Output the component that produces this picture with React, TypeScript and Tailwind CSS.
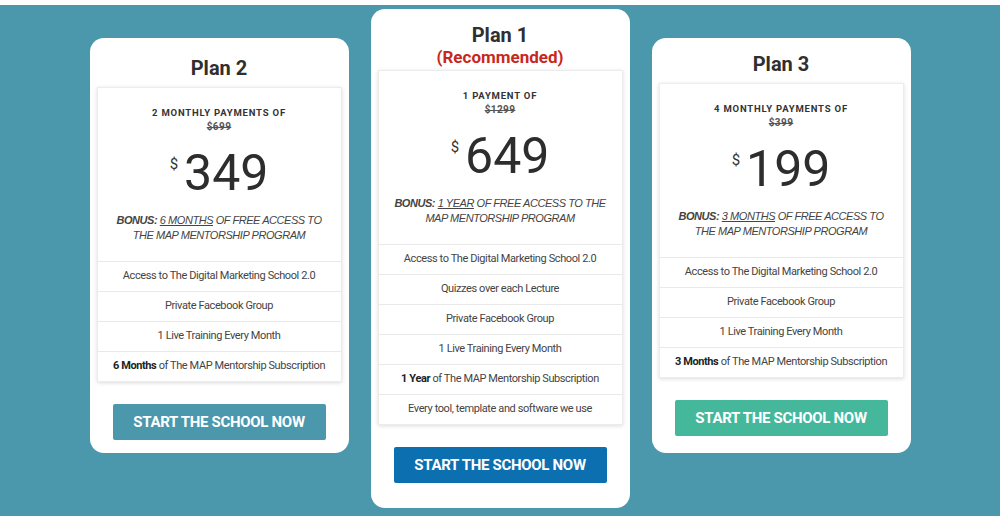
import React from "react";

type Plan = {
    title: string;
    recommended?: boolean;
    payments: string;
    oldPrice: string;
    price: string;
    bonus: string;
    features: React.ReactNode[];
    buttonClass: string;
    cardClass: string;
};

const plans: Plan[] = [
    {
        title: "Plan 2",
        payments: "2 Monthly payments of",
        oldPrice: "$699",
        price: "349",
        bonus: "6 MONTHS",
        features: [
            "Access to The Digital Marketing School 2.0",
            "Private Facebook Group",
            "1 Live Training Every Month",
            <>
                <b className="font-bold text-[#222]">6 Months</b> of The MAP Mentorship Subscription
            </>,
        ],
        buttonClass: "bg-[#4b97ac]",
        cardClass: "mt-[33px] h-[415px] pt-[19px]",
    },
    {
        title: "Plan 1",
        recommended: true,
        payments: "1 Payment of",
        oldPrice: "$1299",
        price: "649",
        bonus: "1 YEAR",
        features: [
            "Access to The Digital Marketing School 2.0",
            "Quizzes over each Lecture",
            "Private Facebook Group",
            "1 Live Training Every Month",
            <>
                <b className="font-bold text-[#222]">1 Year</b> of The MAP Mentorship Subscription
            </>,
            "Every tool, template and software we use",
        ],
        buttonClass: "bg-[#0c6fb0]",
        cardClass: "mt-[4px] pt-[15px] pb-[25px]",
    },
    {
        title: "Plan 3",
        payments: "4 Monthly payments of",
        oldPrice: "$399",
        price: "199",
        bonus: "3 MONTHS",
        features: [
            "Access to The Digital Marketing School 2.0",
            "Private Facebook Group",
            "1 Live Training Every Month",
            <>
                <b className="font-bold text-[#222]">3 Months</b> of The MAP Mentorship Subscription
            </>,
        ],
        buttonClass: "bg-[#45b79b]",
        cardClass: "mt-[33px] h-[415px] pt-[15px]",
    },
];

const PlanCard = ({ plan }: { plan: Plan }) => {
    return (
        <div className={`w-[259px] bg-white rounded-[14px] px-[7px] flex flex-col ${plan.cardClass}`}>
            <h2 className="text-center text-[20px] leading-[22px] font-bold text-[#2f2f2f]">{plan.title}</h2>
            {plan.recommended && (
                <p className="text-center text-[17px] leading-[20px] font-bold text-[#c8281c] mt-px">
                    (Recommended)
                </p>
            )}
            <div
                className={`${plan.recommended ? "mt-[3px]" : "mt-[8px]"} bg-white border border-[#ececec] shadow-[0_1px_4px_rgba(0,0,0,0.14)]`}
            >
                <div className="pt-[18px] text-center">
                    <p className="text-[9.5px] leading-[14px] font-bold uppercase tracking-[0.8px] text-[#333]">
                        {plan.payments}
                    </p>
                    <p className="text-[10px] leading-[14px] font-bold line-through tracking-[0.4px] text-[#555]">
                        {plan.oldPrice}
                    </p>
                    <div className="mt-[9px] h-[60px] flex justify-center items-center">
                        <span className="text-[15px] leading-none text-[#333] mr-[6px] -mt-[18px]">$</span>
                        <span className="text-[50px] leading-[60px] text-[#2d2d2d]">{plan.price}</span>
                    </div>
                    <p className="mt-[10px] px-[12px] text-[11px] leading-[15px] italic tracking-[-0.45px] text-[#444] font-['Liberation_Sans',Arial,sans-serif]">
                        <b className="font-bold">BONUS:</b> <span className="underline">{plan.bonus}</span> OF FREE
                        ACCESS TO THE MAP MENTORSHIP PROGRAM
                    </p>
                </div>
                <ul className="mt-[18px]">
                    {plan.features.map((feature, index) => (
                        <li
                            key={index}
                            className="h-[30px] flex items-center justify-center border-t border-[#e9e9e9] text-[11px] tracking-[-0.4px] text-[#444]"
                        >
                            <span>{feature}</span>
                        </li>
                    ))}
                </ul>
            </div>
            <button
                className={`mt-[22px] mx-[16px] h-[36px] ${plan.buttonClass} text-white text-[15px] font-bold uppercase rounded-[2px] tracking-[-0.3px]`}
            >
                Start the school now
            </button>
        </div>
    );
};

export default function App() {
    return (
        <div className="w-[1000px] h-[516px] overflow-hidden bg-[#4b97ac] font-['Roboto',sans-serif]">
            <div className="h-[5px] bg-white" />
            <div className="flex justify-center items-start gap-[22px]">
                {plans.map((plan) => (
                    <PlanCard key={plan.title} plan={plan} />
                ))}
            </div>
        </div>
    );
}
